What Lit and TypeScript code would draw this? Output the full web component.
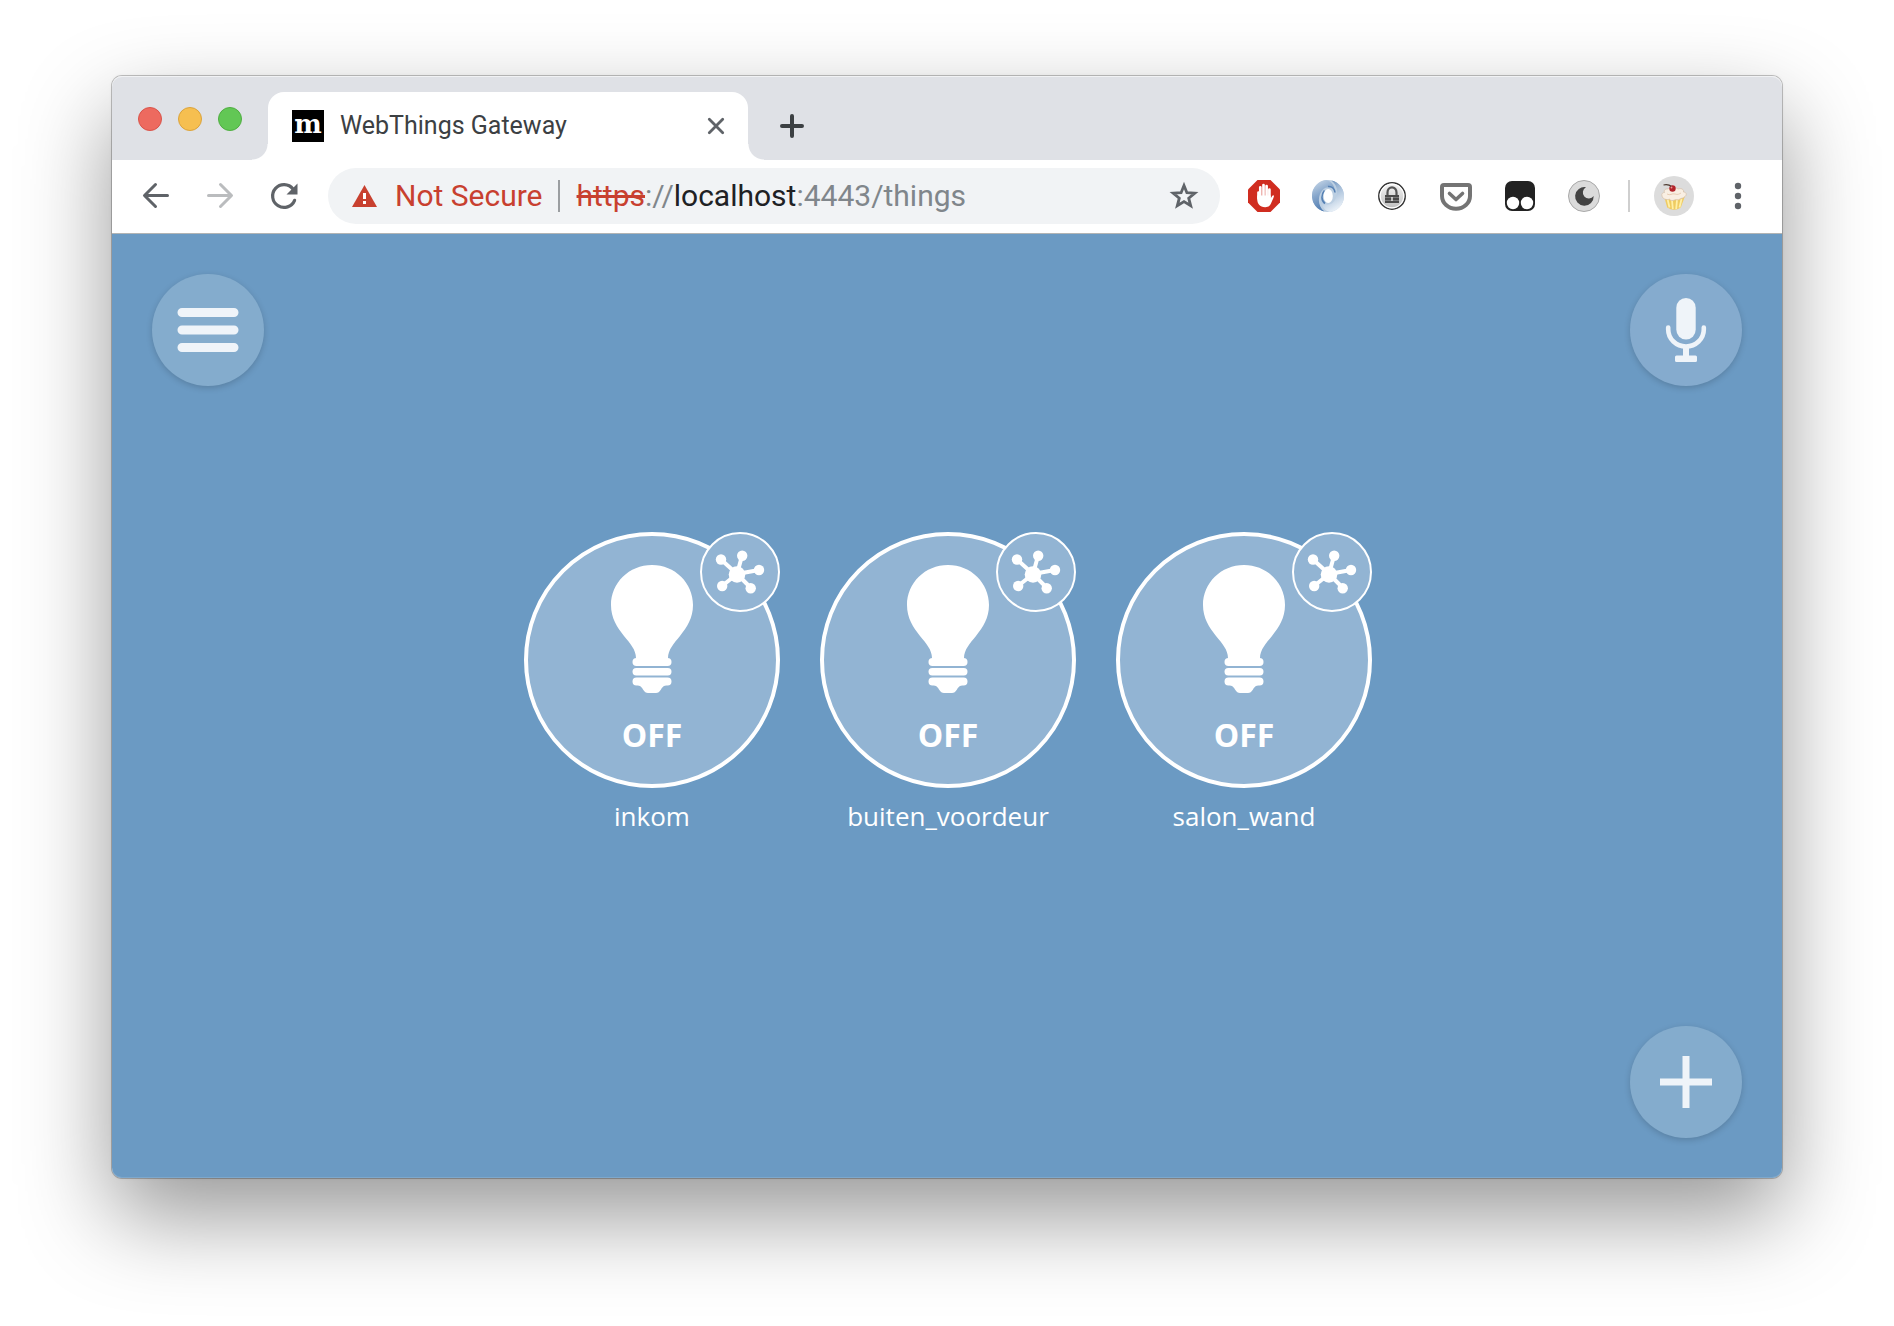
import { LitElement, html, css, svg } from "lit";
import { customElement, property } from "lit/decorators.js";

@customElement("thing-tile")
class ThingTile extends LitElement {
  @property() name = "";
  @property() state = "OFF";

  static styles = css`
    :host {
      display: flex;
      flex-direction: column;
      align-items: center;
      width: 256px;
      font-family: "Open Sans", "Noto Sans", sans-serif;
      color: #fff;
    }
    .disc {
      position: relative;
      width: 256px;
      height: 256px;
    }
    .toggle {
      box-sizing: border-box;
      width: 100%;
      height: 100%;
      padding: 29px 0 0;
      border: 4px solid #fff;
      border-radius: 50%;
      background: #92b4d3;
      color: inherit;
      font: 700 32px/44px "Open Sans", "Noto Sans", sans-serif;
      display: flex;
      flex-direction: column;
      align-items: center;
      gap: 20px;
    }
    .bulb {
      width: 84px;
      height: 128px;
      flex: none;
    }
    .details {
      position: absolute;
      top: 0;
      right: 0;
      box-sizing: border-box;
      width: 80px;
      height: 80px;
      border: 2px solid #fff;
      border-radius: 50%;
      background: #92b4d3;
    }
    .details svg {
      display: block;
      width: 76px;
      height: 76px;
    }
    .name {
      margin: 9px 0 45px;
      font-size: 26px;
      line-height: 38px;
    }
  `;

  render() {
    return html`
      <div class="disc">
        <button class="toggle" aria-label="${this.name} ${this.state}">
          <svg class="bulb" viewBox="0 0 84 128" fill="#fff" aria-hidden="true">
            <path d="M42 0C19 0 1 18 1 40c0 13 6 22 13 31 6 7 12 14 12 22v4h32v-4c0-8 6-15 12-22 7-9 13-18 13-31C83 18 65 0 42 0z" />
            <rect x="22.500" y="93" width="39" height="8" rx="4" />
            <rect x="22.500" y="103" width="39" height="7.500" rx="3.700" />
            <path d="M26.500 112.500h31a4 4 0 0 1 0 8c-4 0-5 1.500-6.500 4-1.500 2.500-3 3.500-5 3.500h-8c-2 0-3.500-1-5-3.500-1.500-2.500-2.500-4-6.500-4a4 4 0 0 1 0-8z" />
          </svg>
          <span>${this.state}</span>
        </button>
        <a class="details" href="#details" aria-label="${this.name} details">
          <svg viewBox="0 0 76 76" fill="#fff" stroke="#fff" aria-hidden="true">
            <path fill="none" stroke-width="4" d="M35 40L19 25.500M35 40L40 22M35 40L57 36M35 40L20 52M35 40L49 54" />
            <g stroke="none">
              <circle cx="35" cy="40.500" r="8.300" />
              <circle cx="19" cy="25.500" r="5.200" />
              <circle cx="40.200" cy="21.800" r="5.200" />
              <circle cx="57" cy="36" r="5.200" />
              <circle cx="20.200" cy="52" r="5.200" />
              <circle cx="48.700" cy="54.300" r="5.200" />
            </g>
          </svg>
        </a>
      </div>
      <div class="name">${this.name}</div>
    `;
  }
}

const extensions = [
  {
    label: "AdBlock",
    art: svg`
      <path fill="#d02d20" d="M9.500 0h13L32 9.500v13L22.500 32h-13L0 22.500v-13z"/>
      <g fill="none" stroke="#fff" stroke-width="2.700" stroke-linecap="round">
        <path d="M12.300 17V7.300M15.500 16V5M18.600 16V6.200M21.400 19V9.500M10.500 18.500V12.500"/>
      </g>
      <path fill="#fff" d="M9.200 15.500h13.500v3l1.300-2.200c.8-1.200 1.800-1.200 2-.3 0 1-1.500 4-2.600 6.500-1 2.700-2.400 4.700-6.200 4.700-5.600 0-8-3.600-8-8.500z"/>`,
  },
  {
    label: "JSON viewer",
    art: svg`
      <defs>
        <linearGradient id="ja" x1="0" y1="0" x2=".4" y2="1"><stop offset="0" stop-color="#d0deec"/><stop offset=".5" stop-color="#86a6cb"/><stop offset="1" stop-color="#4e7ab0"/></linearGradient>
        <linearGradient id="jb" x1="0" y1="0" x2=".4" y2="1"><stop offset="0" stop-color="#4b78ae"/><stop offset=".4" stop-color="#9bb6d4"/><stop offset="1" stop-color="#e6eef6"/></linearGradient>
      </defs>
      <circle cx="16" cy="16" r="16" fill="#bccfe2"/>
      <path fill="url(#ja)" d="M14 .1A16 16 0 0 0 12.500 31.600C5 26 5.500 15 11 9.500 15 6 20.500 7 23 11 22 5 19 1 14 .1z"/>
      <path fill="url(#jb)" d="M19.500.4A16 16 0 0 1 18 31.900C13 31 10 27 9 21c2.500 4 8 5 12 1.500C26.500 17 27 6 19.500.4z"/>
      <path fill="none" stroke="#5681b4" stroke-width="1.600" d="M12.500 10.500c-3.500 4-3.500 10 .5 13M16 6.500c4-.5 6.500 2.500 7 6"/>
      <ellipse cx="16.200" cy="16" rx="4.600" ry="7" fill="#fff"/>`,
  },
  {
    label: "Secure passwords",
    art: svg`
      <defs><linearGradient id="lk" x2="0" y2="1"><stop stop-color="#f6f6f6"/><stop offset="1" stop-color="#bdbdbd"/></linearGradient></defs>
      <circle cx="16" cy="16" r="13.200" fill="url(#lk)" stroke="#333" stroke-width="1.500"/>
      <circle cx="16" cy="16" r="11.800" fill="none" stroke="#fff" stroke-width="1.200"/>
      <path d="M11.500 15.500v-3a4.500 5.200 0 0 1 9 0v3" fill="none" stroke="#555" stroke-width="2.200"/>
      <rect x="9" y="15" width="14" height="8" fill="#4a4a4a"/>
      <path d="M9 17.500h14M9 20.500h14" stroke="#858585" stroke-width=".8"/>
      <path d="M16 17v4" stroke="#eee" stroke-width="1.400"/>`,
  },
  {
    label: "Pocket",
    art: svg`
      <path d="M4 5h24a2 2 0 0 1 2 2v9a14 12.800 0 0 1-28 0V7a2 2 0 0 1 2-2z" fill="#fff" stroke="#747474" stroke-width="4"/>
      <path d="M9.500 13.500l6.500 6 6.500-6" fill="none" stroke="#747474" stroke-width="3.600" stroke-linecap="round" stroke-linejoin="round"/>`,
  },
  {
    label: "Tampermonkey",
    art: svg`
      <rect x="1" y="1" width="30" height="30" rx="7" fill="#222"/>
      <circle cx="9" cy="23" r="6.200" fill="#fff"/><circle cx="23" cy="23" r="6.200" fill="#fff"/>`,
  },
  {
    label: "Dark mode",
    art: svg`
      <circle cx="16" cy="16" r="15.500" fill="#dbdbdb" stroke="#a8a8a8"/>
      <path fill="#444" d="M18 7.200A9.300 9.300 0 1 0 25.700 16a6 6 0 1 1-7.700-8.800z"/>`,
  },
];

@customElement("app-root")
class AppRoot extends LitElement {
  static styles = css`
    :host {
      display: flex;
      box-sizing: border-box;
      min-height: 100vh;
      padding: 76px 112px 148px;
      background: #fff;
      overflow: hidden;
      font-family: Roboto, "Liberation Sans", sans-serif;
    }
    button {
      margin: 0;
      padding: 0;
      border: 0;
      background: none;
      font: inherit;
      color: inherit;
    }
    svg {
      display: block;
      flex: none;
    }
    .window {
      flex: 1;
      display: flex;
      flex-direction: column;
      border-radius: 10px;
      box-shadow: 0 0 0 1px rgba(0, 0, 0, 0.22), 0 0 4px rgba(0, 0, 0, 0.06),
        0 38px 90px rgba(0, 0, 0, 0.41);
    }
    .strip {
      display: flex;
      align-items: flex-end;
      height: 84px;
      border-radius: 10px 10px 0 0;
      background: #dfe1e6;
      box-shadow: inset 0 1px 0 #f1f2f4;
    }
    .lights {
      display: flex;
      align-self: center;
      gap: 16px;
      padding: 2px 10px 0 26px;
    }
    .light {
      box-sizing: border-box;
      width: 24px;
      height: 24px;
      border-radius: 50%;
    }
    .close { background: #ed6a5f; border: 1px solid #d9534a; }
    .minimise { background: #f6bf50; border: 1px solid #dba33c; }
    .zoom { background: #62c755; border: 1px solid #4fae41; }
    .curve {
      width: 16px;
      height: 16px;
    }
    .curve.left { background: radial-gradient(circle at 0 0, #dfe1e6 15px, #fff 16px); }
    .curve.right { background: radial-gradient(circle at 100% 0, #dfe1e6 15px, #fff 16px); }
    .tab {
      box-sizing: border-box;
      display: flex;
      align-items: center;
      width: 480px;
      height: 68px;
      padding: 0 16px 0 24px;
      border-radius: 16px 16px 0 0;
      background: #fff;
    }
    .favicon {
      display: flex;
      justify-content: center;
      width: 32px;
      height: 32px;
      background: #000;
      color: #fff;
      font: 700 26px/28px "DejaVu Serif", serif;
    }
    .title {
      flex: 1;
      margin-left: 16px;
      font-size: 25px;
      line-height: 32px;
      color: #3c4043;
    }
    .toolbar {
      box-sizing: border-box;
      display: flex;
      align-items: center;
      height: 74px;
      padding: 0 12px 1px;
      border-bottom: 1px solid #b2b4b4;
      background: #fff;
    }
    .tool {
      display: flex;
      align-items: center;
      justify-content: center;
      width: 64px;
      height: 64px;
    }
    .omnibox {
      flex: 1;
      display: flex;
      align-items: center;
      height: 56px;
      margin: 0 12px;
      border-radius: 28px;
      background: #f1f3f5;
      font-size: 30px;
      line-height: 40px;
    }
    .warning { margin: 0 18px 0 24px; }
    .insecure { color: #c8402f; }
    .rule {
      width: 2px;
      height: 32px;
      margin: 0 17px 0 15px;
      background: #9b9ea1;
    }
    .url {
      flex: 1;
      color: #80868b;
    }
    .scheme { color: #c8402f; }
    .host { color: #202124; }
    .star { width: 72px; }
    .divider {
      width: 2px;
      height: 32px;
      margin: 0 12px;
      background: #cfcfcf;
    }
    .gateway {
      flex: 1;
      display: flex;
      flex-direction: column;
      justify-content: space-between;
      border-radius: 0 0 10px 10px;
      background: #6b9ac3;
      box-shadow: inset 0 -1px 0 #7ea8cc;
    }
    .bar {
      display: flex;
      justify-content: space-between;
      padding: 40px;
    }
    .bar.bottom { justify-content: flex-end; }
    .round {
      width: 112px;
      height: 112px;
      border-radius: 50%;
      background: #84accd;
      box-shadow: 0 2px 6px rgba(0, 0, 0, 0.17);
    }
    .round.voice { background: #85abce; }
    .things {
      display: flex;
      flex-wrap: wrap;
      justify-content: center;
      gap: 40px;
      padding-left: 2px;
    }
  `;

  render() {
    return html`
      <div class="window">
        <div class="strip">
          <div class="lights">
            <button class="light close" aria-label="Close window"></button>
            <button class="light minimise" aria-label="Minimise window"></button>
            <button class="light zoom" aria-label="Zoom window"></button>
          </div>
          <div class="curve left"></div>
          <div class="tab">
            <div class="favicon">m</div>
            <div class="title">WebThings Gateway</div>
            <button aria-label="Close tab">
              <svg width="32" height="32" viewBox="0 0 32 32" fill="none" stroke="#5f6368" stroke-width="2.800" stroke-linecap="round">
                <path d="M9.300 9.300l13.400 13.400M22.700 9.300L9.300 22.700" />
              </svg>
            </button>
          </div>
          <div class="curve right"></div>
          <button aria-label="New tab">
            <svg width="56" height="68" viewBox="0 0 56 68" fill="none" stroke="#3c4043" stroke-width="4" stroke-linecap="round">
              <path d="M28 24v20M18 34h20" />
            </svg>
          </button>
        </div>

        <div class="toolbar">
          <button class="tool" aria-label="Back">
            <svg width="32" height="32" viewBox="0 0 32 32" fill="none" stroke="#5f6368" stroke-width="3" stroke-linecap="round" stroke-linejoin="round">
              <path d="M27.500 15.500H5M15.500 4.500L4.500 15.500l11 11" />
            </svg>
          </button>
          <button class="tool" aria-label="Forward">
            <svg width="32" height="32" viewBox="0 0 32 32" fill="none" stroke="#babcbe" stroke-width="3" stroke-linecap="round" stroke-linejoin="round">
              <path d="M4.500 15.500H27M16.500 4.500l11 11-11 11" />
            </svg>
          </button>
          <button class="tool" aria-label="Reload">
            <svg width="32" height="32" viewBox="0 0 32 32" fill="none" stroke="#5f6368" stroke-width="3.200">
              <path d="M26.600 20.300A11.400 11.400 0 1 1 25 9" stroke-linecap="round" />
              <path d="M29.500 3.500v11h-11z" fill="#5f6368" stroke="none" />
            </svg>
          </button>
          <div class="omnibox">
            <svg class="warning" width="25" height="22" viewBox="0 0 25 22" aria-hidden="true">
              <path fill="#c8402f" d="M12.500 0L25 22H0z" />
              <path fill="#fff" d="M11 8h3v6h-3zM11 16h3v3h-3z" />
            </svg>
            <span class="insecure">Not Secure</span>
            <span class="rule"></span>
            <span class="url"><s class="scheme">https</s>://<span class="host">localhost</span>:4443/things</span>
            <button class="tool star" aria-label="Bookmark this page">
              <svg width="32" height="32" viewBox="0 0 32 32" fill="none" stroke="#5f6368" stroke-width="2.800">
                <path d="M16 5.500l2.900 7.200 7.900.5-6.100 5 2 7.600-6.700-4.200-6.700 4.200 2-7.600-6.100-5 7.900-.5z" />
              </svg>
            </button>
          </div>
          ${extensions.map(
            (e) => html`<button class="tool" aria-label=${e.label}>
              <svg width="32" height="32" viewBox="0 0 32 32">${e.art}</svg>
            </button>`
          )}
          <span class="divider"></span>
          <button class="tool" aria-label="Profile">
            <svg width="40" height="40" viewBox="0 0 40 40">
              <circle cx="20" cy="20" r="20" fill="#dcdcdc" />
              <path fill="#efcb62" d="M10 20l3.200 11.500Q20 36 26.800 31.500L31 20z" />
              <path fill="none" stroke="#fff0a8" stroke-width="1.800" d="M13.500 23l2 8.500M18 24l.8 9M23 24l-.8 9M27.500 23l-2 8.500" />
              <path fill="#f9efe3" stroke="#d6bfa6" stroke-width=".7" d="M8 20c-.8-2.500 1-3.500 2.500-3.500-1-2.500 1-4 3.500-3.500 2-2 8-2 10 0 3-1 6 0 5.500 3 3 0 3.500 3 1.500 4.500-1.500 2-4 1.500-5 2.500-2 1.800-4 0-5.500 1-2 1-4 .5-5-.8-3 1-7-.2-7.500-3.200z" />
              <path fill="none" stroke="#e8cdb4" d="M13 18c3 2 5-1 8 0s4 0 6-1" />
              <circle cx="18.500" cy="12.500" r="3.200" fill="#b3242c" />
              <path fill="none" stroke="#4d3a30" stroke-width="1.200" d="M17.500 10.500Q14.500 8 9.500 9" />
              <circle cx="17.500" cy="11.500" r=".9" fill="#ee9b99" />
            </svg>
          </button>
          <button class="tool" aria-label="Browser menu">
            <svg width="8" height="28" viewBox="0 0 8 28" fill="#5f6368">
              <circle cx="4" cy="4" r="3.200" /><circle cx="4" cy="14" r="3.200" /><circle cx="4" cy="24" r="3.200" />
            </svg>
          </button>
        </div>

        <main class="gateway">
          <div class="bar">
            <button class="round" aria-label="Menu">
              <svg width="112" height="112" viewBox="0 0 112 112" stroke="#eff4f9" stroke-width="9" stroke-linecap="round">
                <path d="M30 38.500h52M30 56h52M30 73.500h52" />
              </svg>
            </button>
            <button class="round voice" aria-label="Speak a command">
              <svg width="112" height="112" viewBox="0 0 112 112" fill="#eff4f9">
                <rect x="46.300" y="24" width="19.400" height="41.500" rx="9.700" />
                <path d="M38.200 53.500v2a17.800 17 0 0 0 35.600 0v-2" fill="none" stroke="#eff4f9" stroke-width="4.600" stroke-linecap="round" />
                <path d="M53 73h6v8.500h6.500a1.500 1.500 0 0 1 1.500 1.500v3.500a1.500 1.500 0 0 1-1.500 1.500h-19a1.500 1.500 0 0 1-1.500-1.500V83a1.500 1.500 0 0 1 1.500-1.500H53z" />
              </svg>
            </button>
          </div>
          <div class="things">
            <thing-tile name="inkom"></thing-tile>
            <thing-tile name="buiten_voordeur"></thing-tile>
            <thing-tile name="salon_wand"></thing-tile>
          </div>
          <div class="bar bottom">
            <button class="round" aria-label="Add thing">
              <svg width="112" height="112" viewBox="0 0 112 112" stroke="#eff4f9" stroke-width="7">
                <path d="M56 30v52M30 56h52" />
              </svg>
            </button>
          </div>
        </main>
      </div>
    `;
  }
}
